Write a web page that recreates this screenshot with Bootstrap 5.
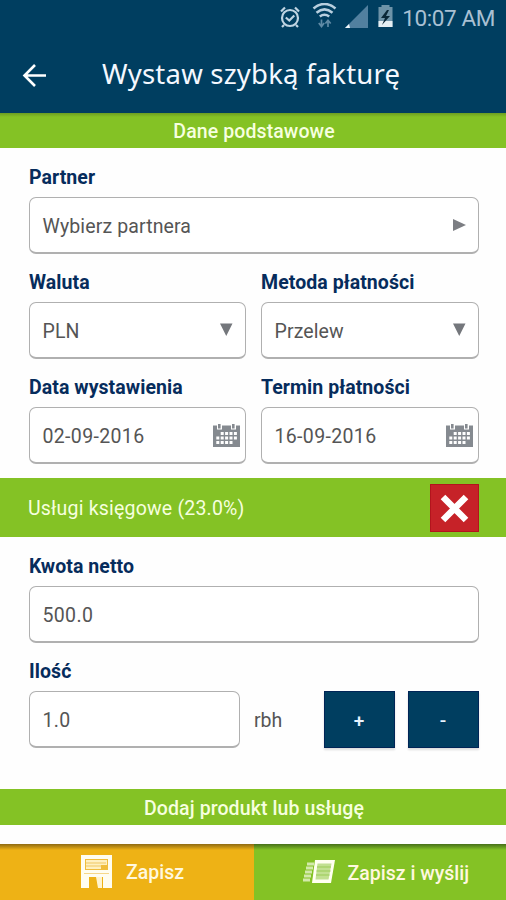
<!DOCTYPE html>
<html lang="pl">
<head>
<meta charset="utf-8">
<meta name="viewport" content="width=device-width, initial-scale=1">
<title>Wystaw szybką fakturę</title>
<link href="https://cdn.jsdelivr.net/npm/bootstrap@5.3.0/dist/css/bootstrap.min.css" rel="stylesheet">
<style>
:root{--navy:#003e60;--green:#84c225;--amber:#eeb215}
body{font-family:Roboto,"Noto Sans",sans-serif;font-size:19.5px;line-height:24px;color:#555;background:#fefefe;overflow:hidden}
svg{display:block;flex:none}
.screen{height:900px}
.app-head{background:var(--navy);height:113px}
.status-line{height:36px;padding-right:11px;color:#a9c0d3;font-size:22.5px}
.status-line .clock{margin-left:9px;letter-spacing:-.4px;margin-top:-1px}
.title-line{height:77px;padding-left:22px}
.page-title{font-family:"Noto Sans",sans-serif;font-size:27.500px;letter-spacing:.2px;font-weight:400;line-height:36px;color:#f4f8ff;margin:-2px 0 0 54px}
.band{background:var(--green);color:#f6ffdf;font-weight:500}
.band-top{height:35px;background:linear-gradient(#6b9d22,var(--green) 4px);padding:3px 0 0 2px;letter-spacing:.1px}
.band-item{height:59px;padding:1px 27px 0 28px;margin-top:14px;font-weight:400;letter-spacing:.2px}
.band-item span{padding-top:2px}
.band-add{height:36px;margin-top:41px;padding:4px 0 0 2px;letter-spacing:.1px}
.fields{padding:1px 27.5px 0 28.5px}
.field-label{display:block;font-weight:700;color:#062c5c;padding:17px 0 7px .5px;letter-spacing:.06px;line-height:24px}
.field-box{height:57px;border:1.5px solid #b0b0b0;border-bottom-width:2px;border-radius:7px;background:#fff;padding:1px 12px 0 13px;letter-spacing:.12px}
.field-box span{padding-top:2px}
.field-box .date{letter-spacing:.35px}
.two{display:grid;grid-template-columns:217.5px 218px;column-gap:14.5px}
.del{width:49px;height:48px;background:#c62228;border:1px solid #b3141d;border-radius:0}
.qty{width:211px}
.unit{margin-left:14.5px;padding-top:2px}
.steps{gap:13px}
.step{width:71px;height:57px;background:var(--navy);border:1px solid #002456;border-radius:0;color:#e8f4ff;font-size:19px;font-weight:500;box-shadow:0 2px 2px #ddd}
.foot{height:56px;color:#fff8df}
.foot .btn{border:0;border-radius:0;color:inherit;font-size:19.5px;font-weight:500}
.foot .save{background:linear-gradient(#8f6a12,var(--amber) 6px);width:253.5px;padding:2px 0 0 81px}
.foot .send{background:linear-gradient(#466f1a,var(--green) 6px);padding:3px 0 0 49px}
.save svg{margin-right:13px;margin-top:-2px}
.send svg{margin-right:11px;margin-top:-3px}
</style>
</head>
<body>
<div class="screen d-flex flex-column">
<header class="app-head">
  <div class="status-line d-flex align-items-center justify-content-end">
    <svg width="118" height="30" viewBox="275 4 118 30">
      <g fill="none" stroke="#bfd4e2" stroke-width="2.2"><circle cx="290" cy="19" r="8"/><path d="M285.8 18.5l3.5 3 5-5M281 12.5l4-4M299 12.5l-4-4M284 26l-2 2M296 26l2 2"/></g>
      <g fill="none" stroke="#b8cfdf" stroke-width="2.6"><path d="M313.500 9.500q11-9 22 0M316.500 13.700q8-6.500 16 0M319.800 17.500q4.700-3.500 9.400 0"/></g>
      <path d="M321.500 20.500v6M318.800 24l2.700 3.500 2.700-3.500M328 28v-6.500M325.400 24.500l2.600-3.200 2.700 3.200" fill="none" stroke="#5f8aa5" stroke-width="1.700"/>
      <path d="M345 29l23-23v23z" fill="#52809f"/><path d="M345 29l4-4 1 4z" fill="#eef6fb"/>
      <path d="M378.500 8h3V6h8v2h3v20h-14z" fill="#6e93a8"/><path d="M378.500 22h14v6h-14z" fill="#e4eef3"/><path d="M387 11l-6 8h4l-3 7 8-9h-4l3-6z" fill="#0a2737"/>
    </svg>
    <span class="clock">10:07 AM</span>
  </div>
  <div class="title-line d-flex align-items-center">
    <svg width="26" height="26" viewBox="0 0 26 26" fill="none" stroke="#fff" stroke-width="2.600"><path d="M24 13.500H3M13 3L2.500 13.500 13 24"/></svg>
    <h1 class="page-title">Wystaw szybką fakturę</h1>
  </div>
</header>
<div class="band band-top d-flex align-items-center justify-content-center">Dane podstawowe</div>
<main>
  <div class="fields">
    <label class="field-label">Partner</label>
    <div class="field-box d-flex align-items-center justify-content-between"><span>Wybierz partnera</span><svg width="13" height="14" viewBox="0 0 13 14"><path d="M0 0l13 6-13 6z" fill="#7c7e83"/></svg></div>
    <div class="two">
      <div><label class="field-label">Waluta</label>
        <div class="field-box d-flex align-items-center justify-content-between"><span>PLN</span><svg width="13" height="16" viewBox="0 0 13 16"><path d="M0 .5h12.500L6.250 13z" fill="#74777c"/></svg></div></div>
      <div><label class="field-label">Metoda płatności</label>
        <div class="field-box d-flex align-items-center justify-content-between"><span>Przelew</span><svg width="13" height="16" viewBox="0 0 13 16"><path d="M0 .5h12.500L6.250 13z" fill="#74777c"/></svg></div></div>
      <div><label class="field-label">Data wystawienia</label>
        <div class="field-box d-flex align-items-center justify-content-between pe-1"><span class="date">02-09-2016</span><svg width="28" height="24" viewBox="0 0 28 24"><use href="#cal"/></svg></div></div>
      <div><label class="field-label">Termin płatności</label>
        <div class="field-box d-flex align-items-center justify-content-between pe-1"><span class="date">16-09-2016</span><svg width="28" height="24" viewBox="0 0 28 24"><defs><g id="cal"><path d="M0 1.500h27V23H0z" fill="#858a90"/><path d="M4 0h5v5.500H4zM18 0h5v5.500h-5z" fill="#fff"/><path d="M5 0h2.600v4.500H5zM19 0h2.600v4.500H19z" fill="#858a90"/><path d="M7.700 9.500h17.300M3.300 14h22M3.300 18.500h17" stroke="#fff" stroke-width="3" stroke-dasharray="3 1.400"/></g></defs><use href="#cal"/></svg></div></div>
    </div>
  </div>
  <div class="band band-item d-flex align-items-center justify-content-between"><span>Usługi księgowe (23.0%)</span>
    <button class="btn del p-0 d-flex align-items-center justify-content-center" aria-label="Usuń"><svg width="29" height="29" viewBox="0 0 29 29"><path d="M3 3l23 23M26 3L3 26" stroke="#fff" stroke-width="6.500"/></svg></button></div>
  <div class="fields">
    <label class="field-label">Kwota netto</label>
    <div class="field-box d-flex align-items-center"><span class="date">500.0</span></div>
    <label class="field-label">Ilość</label>
    <div class="d-flex align-items-center">
      <div class="field-box qty d-flex align-items-center"><span class="date">1.0</span></div>
      <span class="unit">rbh</span>
      <div class="d-flex ms-auto steps"><button class="btn step p-0 pt-1">+</button><button class="btn step p-0 pt-1">-</button></div>
    </div>
  </div>
  <div class="band band-add d-flex align-items-center justify-content-center">Dodaj produkt lub usługę</div>
</main>
<footer class="foot d-flex mt-auto">
  <button class="btn save d-flex align-items-center"><svg width="32" height="34" viewBox="0 0 32 34"><path d="M0 0h31v33H0z" fill="#fffdf0"/><path d="M4 4h23v11H4z" fill="#f0bd3c"/><path d="M5 5h21v5h-6v4H5z" fill="#fff0c0"/><path d="M5 8h20M5 11h15" stroke="#efc763" stroke-width="1"/><path d="M3 18.500h25" stroke="#f6d78a" stroke-width="1"/><path d="M8 22h14v11H8z" fill="#eeb215"/><path d="M15 22h6v11h-4z" fill="#fff4cf"/></svg>Zapisz</button>
  <button class="btn send flex-fill d-flex align-items-center"><svg width="34" height="24" viewBox="0 0 34 24"><path d="M12 0h20l-4 23H9z" fill="#fffff0"/><path d="M14.500 3.500h14l-3 16H12.500z" fill="#c2e091"/><path d="M14 7h14M13.500 11h14M13 15h13.500" stroke="#9bcb57" stroke-width="1"/><path d="M4 4h7M3 8h7M2 12h7M1 16h7M0 20h7" stroke="#d3e9ab" stroke-width="2.800"/></svg>Zapisz i wyślij</button>
</footer>
</div>
<script src="https://cdn.jsdelivr.net/npm/bootstrap@5.3.0/dist/js/bootstrap.bundle.min.js"></script>
</body>
</html>
